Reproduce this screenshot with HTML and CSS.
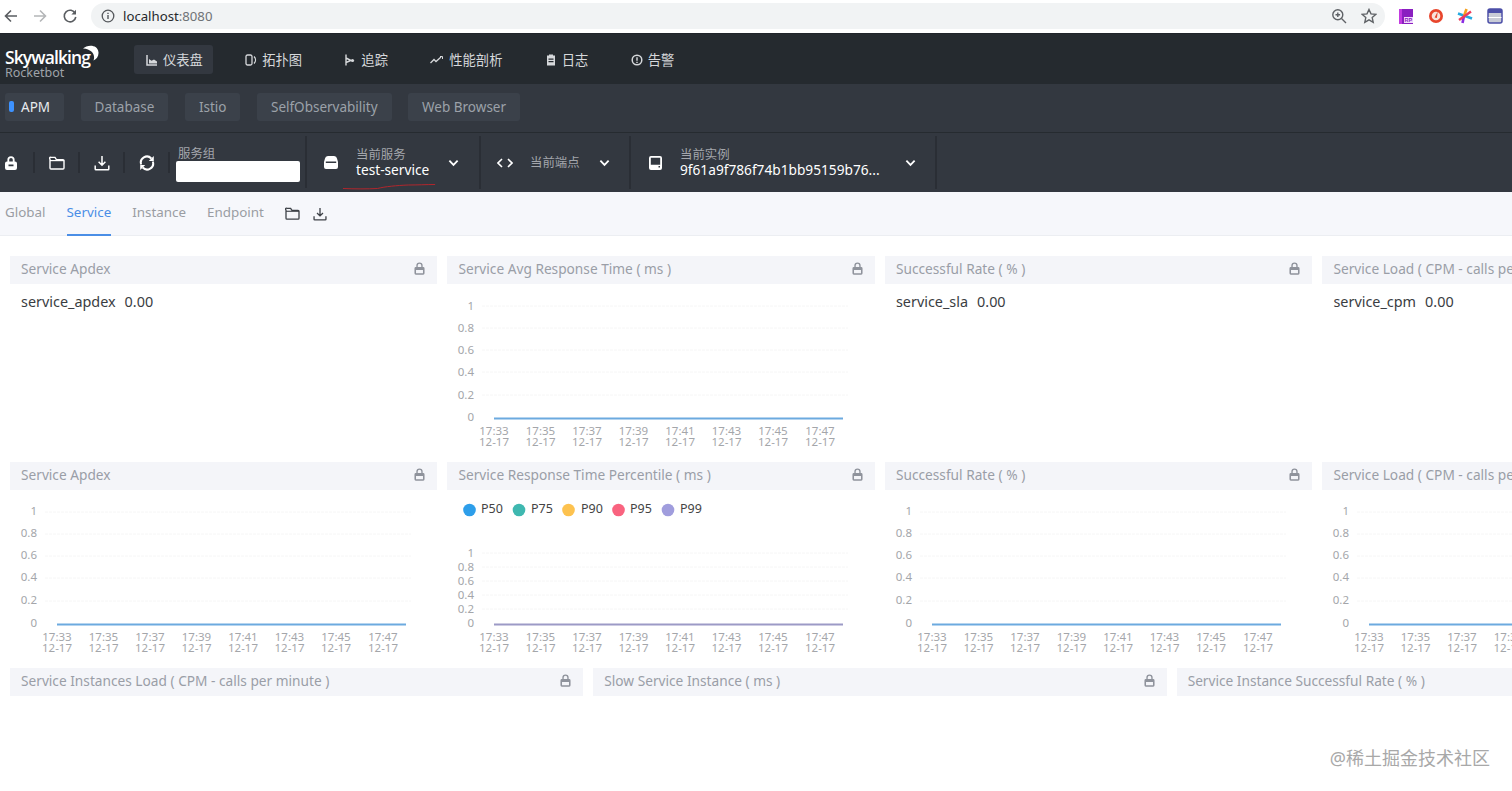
FILE: index.html
```html
<!DOCTYPE html>
<html lang="zh">
<head>
<meta charset="utf-8">
<title>Rocketbot</title>
<link rel="stylesheet" href="styles.css">
</head>
<body>
<svg class="sprite" aria-hidden="true">
  <symbol id="i-lock" viewBox="0 0 12 14"><path d="M3.300 6V3.800a2.700 2.700 0 0 1 5.400 0V6" fill="none" stroke="currentColor" stroke-width="1.500"/><path fill-rule="evenodd" fill="currentColor" d="M2 5.400h8a1.500 1.500 0 0 1 1.500 1.500v5.400A1.500 1.500 0 0 1 10 13.800H2a1.500 1.500 0 0 1-1.500-1.500V6.900A1.500 1.500 0 0 1 2 5.400zm.2 3.300v3.400h7.600V8.700z"/></symbol>
  <symbol id="i-lock-solid" viewBox="0 0 12 14"><path d="M3.300 6V3.800a2.700 2.700 0 0 1 5.400 0V6" fill="none" stroke="currentColor" stroke-width="1.800"/><path fill-rule="evenodd" fill="currentColor" d="M2 5.400h8a2 2 0 0 1 2 2v4.600a2 2 0 0 1-2 2H2a2 2 0 0 1-2-2V7.400a2 2 0 0 1 2-2zm1.500 3.200v1.700h5V8.600z"/></symbol>
  <symbol id="i-folder" viewBox="0 0 16 14"><path d="M1 3.200V12a1 1 0 0 0 1 1h12a1 1 0 0 0 1-1V4.600a1 1 0 0 0-1-1H7.400L6 1.400H2a1 1 0 0 0-1 1.800z" fill="none" stroke="currentColor" stroke-width="1.400"/><path d="M1 4.600h14" stroke="currentColor" stroke-width="1.200"/></symbol>
  <symbol id="i-down" viewBox="0 0 16 16"><path d="M8 1v9M4.600 6.800 8 10.200l3.400-3.400M1.200 10.500V14a.8.8 0 0 0 .8.8h12a.8.8 0 0 0 .8-.8v-3.500" fill="none" stroke="currentColor" stroke-width="1.500"/></symbol>
  <symbol id="i-chev" viewBox="0 0 12 8"><path d="M1.500 1.500 6 6l4.500-4.500" fill="none" stroke="currentColor" stroke-width="2"/></symbol>
</svg>

<header class="browser">
  <svg class="b-ico" width="16" height="16" viewBox="0 0 16 16"><path d="M14 8H3M8 2.500 2.500 8 8 13.500" fill="none" stroke="#5a5d61" stroke-width="1.600"/></svg>
  <svg class="b-ico fwd" width="16" height="16" viewBox="0 0 16 16"><path d="M2 8h11M8 2.500 13.500 8 8 13.500" fill="none" stroke="#b4b6b8" stroke-width="1.600"/></svg>
  <svg class="b-ico rel" width="16" height="16" viewBox="0 0 16 16"><path d="M13.300 5.500A5.800 5.800 0 1 0 13.800 9" fill="none" stroke="#5a5d61" stroke-width="1.600"/><path d="M14 1.800v4.600H9.400z" fill="#5a5d61"/></svg>
  <div class="omni">
    <svg width="14" height="14" viewBox="0 0 14 14"><circle cx="7" cy="7" r="5.800" fill="none" stroke="#55585c" stroke-width="1.300"/><path d="M7 6v4M7 3.700v1.300" stroke="#55585c" stroke-width="1.400"/></svg>
    <span class="url">localhost<span class="port">:8080</span></span>
    <span class="spacer"></span>
    <svg class="om-zoom" width="16" height="16" viewBox="0 0 16 16"><circle cx="6.800" cy="6.800" r="5" fill="none" stroke="#5f6266" stroke-width="1.400"/><path d="M10.500 10.500 15 15M4.500 6.800h4.600M6.800 4.500v4.600" stroke="#5f6266" stroke-width="1.400"/></svg>
    <svg width="16" height="16" viewBox="0 0 16 16"><path d="m8 1.500 2 4.400 4.800.5-3.600 3.200 1 4.700L8 11.900l-4.200 2.400 1-4.700L1.200 6.400 6 5.900z" fill="none" stroke="#5f6266" stroke-width="1.400"/></svg>
  </div>
  <div class="exts">
    <svg width="16" height="16" viewBox="0 0 16 16"><rect x="1" y="1" width="14" height="15" fill="#8a1fc0"/><rect x="1" y="1" width="3" height="15" fill="#c23be0"/><rect x="6" y="9" width="9" height="6" fill="#f3d9fb"/><text class="rp" x="6.500" y="14">RP</text></svg>
    <svg width="16" height="16" viewBox="0 0 16 16"><circle cx="8" cy="8" r="7" fill="#e8452c"/><circle cx="8" cy="8" r="4.300" fill="#f8e3da"/><path d="M9.800 3.500 6.600 9.500l2.300.4z" fill="#e8452c"/></svg>
    <svg width="16" height="16" viewBox="0 0 16 16"><path d="M1 5.500l14 5" stroke="#25a9e0" stroke-width="2.600"/><path d="M9.500 1 7 8" stroke="#f4a11f" stroke-width="2.600"/><path d="M7 8 5.500 15" stroke="#8a2be2" stroke-width="2.600"/><path d="M14 3.500 2 12" stroke="#ee3d5b" stroke-width="2.400"/></svg>
    <svg width="16" height="16" viewBox="0 0 16 16"><rect x="1" y="1" width="14" height="14" rx="2" fill="#c8cbd6" stroke="#4c4fa8" stroke-width="1.500"/><rect x="1" y="1" width="14" height="4" fill="#4c4fa8"/><path d="M1.500 9.500h13" stroke="#fff"/></svg>
  </div>
</header>

<nav class="nav">
  <div class="logo">
    <div class="logo-main">Skywalking</div>
    <svg class="logo-arc" width="16" height="16" viewBox="0 0 16 16"><path d="M0 3.500C4-.5 15-1 15.500 7.500c.2 3.700-2 6.800-5 8C12.500 10.500 9.500 4 0 3.500z" fill="#fff"/></svg>
    <div class="logo-sub">Rocketbot</div>
  </div>
  <a class="nav-item active"><svg class="nav-ico" width="12" height="12" viewBox="0 0 12 12"><path d="M1 1v10h10" fill="none" stroke="currentColor" stroke-width="1.500"/><path d="M3 9.500V5l2.500 1.800L8 5.500l3 2v2z" fill="currentColor"/></svg>仪表盘</a>
  <a class="nav-item"><svg class="nav-ico" width="12" height="12" viewBox="0 0 12 12"><rect x="1" y="1" width="6" height="10" rx="1.500" fill="none" stroke="currentColor" stroke-width="1.300"/><path d="M9 2.500c2 2 2 5 0 7" fill="none" stroke="currentColor" stroke-width="1.300"/></svg>拓扑图</a>
  <a class="nav-item"><svg class="nav-ico" width="12" height="12" viewBox="0 0 12 12"><path d="M2 .5v11M2 4l5 2.500-5 2" fill="none" stroke="currentColor" stroke-width="1.400"/><circle cx="8.500" cy="6.500" r="1.600" fill="currentColor"/></svg>追踪</a>
  <a class="nav-item"><svg class="nav-ico wide" width="13" height="12" viewBox="0 0 13 12"><path d="M.5 9 4 5.500l2 2L11 3" fill="none" stroke="currentColor" stroke-width="1.300"/><path d="M10 2.500h2.500V5" fill="none" stroke="currentColor"/></svg>性能剖析</a>
  <a class="nav-item"><svg class="nav-ico" width="12" height="12" viewBox="0 0 12 12"><path fill-rule="evenodd" d="M2 1.500h2V.5h4v1h2v10H2zm1.500 3v1.200h5V4.500zm0 2.500v1.200h5V7z" fill="currentColor"/></svg>日志</a>
  <a class="nav-item"><svg class="nav-ico" width="12" height="12" viewBox="0 0 12 12"><circle cx="6" cy="6" r="4.800" fill="none" stroke="currentColor" stroke-width="1.500"/><path d="M6 3.200v3.500M6 7.800v1.200" stroke="currentColor" stroke-width="1.400"/></svg>告警</a>
</nav>

<div class="groups">
  <a class="group on"><i class="mark"></i>APM</a>
  <a class="group">Database</a>
  <a class="group">Istio</a>
  <a class="group">SelfObservability</a>
  <a class="group">Web Browser</a>
</div>

<div class="toolbar">
  <div class="tool t-lock"><svg width="12" height="14"><use href="#i-lock-solid"/></svg></div>
  <div class="tool t-folder"><svg width="16" height="14"><use href="#i-folder"/></svg></div>
  <div class="tool t-down"><svg width="16" height="16"><use href="#i-down"/></svg></div>
  <div class="tool t-refresh"><svg width="16" height="16" viewBox="0 0 16 16"><path d="M2.200 9.500A6 6 0 0 1 12.300 3.500M13.800 6.500A6 6 0 0 1 3.700 12.500" fill="none" stroke="#fff" stroke-width="2"/><path d="M14.800 1v5h-5zM1.200 15v-5h5z" fill="#fff"/></svg></div>
  <div class="tool t-group">
    <div class="t-label">服务组</div>
    <div class="t-input"></div>
  </div>
  <div class="tool t-sel t-service">
    <svg class="sel-ico" width="14" height="13" viewBox="0 0 14 13"><path fill-rule="evenodd" fill="#fff" d="M4 0h6a3 3 0 0 1 3 2.500L14 6v5a2 2 0 0 1-2 2H2a2 2 0 0 1-2-2V6l1-3.500A3 3 0 0 1 4 0zM1.800 5.600v1.300h10.400V5.600z"/></svg>
    <div class="sel-text"><div class="t-label">当前服务</div><div class="t-value">test-service</div></div>
    <svg class="chev" width="11" height="8"><use href="#i-chev"/></svg>
    <svg class="scribble" width="96" height="8" viewBox="0 0 100 8" preserveAspectRatio="none"><path d="M1 6.500c12 .5 26 .5 36 0 8-2 20-3 32-3.500 10 0 18-.5 28-.5" fill="none" stroke="#b3262c" stroke-width="1"/></svg>
  </div>
  <div class="tool t-sel t-endpoint">
    <svg class="sel-ico" width="16" height="10" viewBox="0 0 16 10"><path d="M5 1 1 5l4 4M11 1l4 4-4 4" fill="none" stroke="#fff" stroke-width="1.600"/></svg>
    <div class="sel-text"><div class="t-label">当前端点</div></div>
    <svg class="chev" width="11" height="8"><use href="#i-chev"/></svg>
  </div>
  <div class="tool t-sel t-instance">
    <svg class="sel-ico" width="15" height="14" viewBox="0 0 15 14"><path fill-rule="evenodd" fill="#fff" d="M3 0h9a2 2 0 0 1 2 2v10a2 2 0 0 1-2 2H3a2 2 0 0 1-2-2V2a2 2 0 0 1 2-2zm-.2 1.800v7h9.400v-7zM10.500 10v1.500H12V10z"/></svg>
    <div class="sel-text"><div class="t-label">当前实例</div><div class="t-value">9f61a9f786f74b1bb95159b76...</div></div>
    <svg class="chev" width="11" height="8"><use href="#i-chev"/></svg>
  </div>
</div>

<div class="tabs">
  <a class="tab">Global</a>
  <a class="tab cur">Service</a>
  <a class="tab">Instance</a>
  <a class="tab">Endpoint</a>
  <svg class="tab-ico first" width="15" height="13"><use href="#i-folder"/></svg>
  <svg class="tab-ico" width="14" height="14"><use href="#i-down"/></svg>
</div>

<main class="viewport">
  <div class="grid">
    <section class="card s3">
      <header class="card-h"><span>Service Apdex</span><svg class="lock" width="11" height="13"><use href="#i-lock"/></svg></header>
      <p class="metric">service_apdex<b>0.00</b></p>
    </section>
    <section class="card s3">
      <header class="card-h"><span>Service Avg Response Time ( ms )</span><svg class="lock" width="11" height="13"><use href="#i-lock"/></svg></header>
      <svg class="chart" width="428" height="168">
        <g class="grid-l"><path d="M34 22h366M34 44h366M34 66h366M34 88h366M34 111h366"/></g>
        <g class="ay"><text x="26" y="26">1</text><text x="26" y="48">0.8</text><text x="26" y="70">0.6</text><text x="26" y="92">0.4</text><text x="26" y="115">0.2</text><text x="26" y="137">0</text></g>
        <path class="line blue" d="M46 134.500h349"/>
        <g class="ax"><text x="46" y="151">17:33</text><text x="46" y="162">12-17</text><text x="92.500" y="151">17:35</text><text x="92.500" y="162">12-17</text><text x="139" y="151">17:37</text><text x="139" y="162">12-17</text><text x="185.500" y="151">17:39</text><text x="185.500" y="162">12-17</text><text x="232" y="151">17:41</text><text x="232" y="162">12-17</text><text x="278.500" y="151">17:43</text><text x="278.500" y="162">12-17</text><text x="325" y="151">17:45</text><text x="325" y="162">12-17</text><text x="372" y="151">17:47</text><text x="372" y="162">12-17</text></g>
      </svg>
    </section>
    <section class="card s3">
      <header class="card-h"><span>Successful Rate ( % )</span><svg class="lock" width="11" height="13"><use href="#i-lock"/></svg></header>
      <p class="metric">service_sla<b>0.00</b></p>
    </section>
    <section class="card s3">
      <header class="card-h"><span>Service Load ( CPM - calls per minute )</span><svg class="lock" width="11" height="13"><use href="#i-lock"/></svg></header>
      <p class="metric">service_cpm<b>0.00</b></p>
    </section>

    <section class="card s3">
      <header class="card-h"><span>Service Apdex</span><svg class="lock" width="11" height="13"><use href="#i-lock"/></svg></header>
      <svg class="chart" width="428" height="168">
        <g class="grid-l"><path d="M34 22h366M34 44h366M34 66h366M34 88h366M34 111h366"/></g>
        <g class="ay"><text x="26" y="25">1</text><text x="26" y="47">0.8</text><text x="26" y="69">0.6</text><text x="26" y="91">0.4</text><text x="26" y="114">0.2</text><text x="26" y="137">0</text></g>
        <path class="line blue" d="M46 134.500h349"/>
        <g class="ax"><text x="46" y="151">17:33</text><text x="46" y="162">12-17</text><text x="92.500" y="151">17:35</text><text x="92.500" y="162">12-17</text><text x="139" y="151">17:37</text><text x="139" y="162">12-17</text><text x="185.500" y="151">17:39</text><text x="185.500" y="162">12-17</text><text x="232" y="151">17:41</text><text x="232" y="162">12-17</text><text x="278.500" y="151">17:43</text><text x="278.500" y="162">12-17</text><text x="325" y="151">17:45</text><text x="325" y="162">12-17</text><text x="372" y="151">17:47</text><text x="372" y="162">12-17</text></g>
      </svg>
    </section>
    <section class="card s3">
      <header class="card-h"><span>Service Response Time Percentile ( ms )</span><svg class="lock" width="11" height="13"><use href="#i-lock"/></svg></header>
      <svg class="chart" width="428" height="168">
        <g class="legend"><circle cx="21.500" cy="20" r="6.300" fill="#2d9eea"/><text x="33" y="23">P50</text><circle cx="71" cy="20" r="6.300" fill="#3fb8b0"/><text x="83" y="23">P75</text><circle cx="120.500" cy="20" r="6.300" fill="#fdc24f"/><text x="133" y="23">P90</text><circle cx="170.500" cy="20" r="6.300" fill="#f9637f"/><text x="182" y="23">P95</text><circle cx="220" cy="20" r="6.300" fill="#a09ddd"/><text x="232" y="23">P99</text></g>
        <g class="grid-l"><path d="M34 63h366M34 77h366M34 91h366M34 105h366M34 119h366"/></g>
        <g class="ay"><text x="26" y="67">1</text><text x="26" y="81">0.8</text><text x="26" y="95">0.6</text><text x="26" y="109">0.4</text><text x="26" y="123">0.2</text><text x="26" y="137">0</text></g>
        <path class="line purple" d="M46 134.500h349"/>
        <g class="ax"><text x="46" y="151">17:33</text><text x="46" y="162">12-17</text><text x="92.500" y="151">17:35</text><text x="92.500" y="162">12-17</text><text x="139" y="151">17:37</text><text x="139" y="162">12-17</text><text x="185.500" y="151">17:39</text><text x="185.500" y="162">12-17</text><text x="232" y="151">17:41</text><text x="232" y="162">12-17</text><text x="278.500" y="151">17:43</text><text x="278.500" y="162">12-17</text><text x="325" y="151">17:45</text><text x="325" y="162">12-17</text><text x="372" y="151">17:47</text><text x="372" y="162">12-17</text></g>
      </svg>
    </section>
    <section class="card s3">
      <header class="card-h"><span>Successful Rate ( % )</span><svg class="lock" width="11" height="13"><use href="#i-lock"/></svg></header>
      <svg class="chart" width="428" height="168">
        <g class="grid-l"><path d="M34 22h366M34 44h366M34 66h366M34 88h366M34 111h366"/></g>
        <g class="ay"><text x="26" y="25">1</text><text x="26" y="47">0.8</text><text x="26" y="69">0.6</text><text x="26" y="91">0.4</text><text x="26" y="114">0.2</text><text x="26" y="137">0</text></g>
        <path class="line blue" d="M46 134.500h349"/>
        <g class="ax"><text x="46" y="151">17:33</text><text x="46" y="162">12-17</text><text x="92.500" y="151">17:35</text><text x="92.500" y="162">12-17</text><text x="139" y="151">17:37</text><text x="139" y="162">12-17</text><text x="185.500" y="151">17:39</text><text x="185.500" y="162">12-17</text><text x="232" y="151">17:41</text><text x="232" y="162">12-17</text><text x="278.500" y="151">17:43</text><text x="278.500" y="162">12-17</text><text x="325" y="151">17:45</text><text x="325" y="162">12-17</text><text x="372" y="151">17:47</text><text x="372" y="162">12-17</text></g>
      </svg>
    </section>
    <section class="card s3">
      <header class="card-h"><span>Service Load ( CPM - calls per minute )</span><svg class="lock" width="11" height="13"><use href="#i-lock"/></svg></header>
      <svg class="chart" width="428" height="168">
        <g class="grid-l"><path d="M34 22h366M34 44h366M34 66h366M34 88h366M34 111h366"/></g>
        <g class="ay"><text x="26" y="25">1</text><text x="26" y="47">0.8</text><text x="26" y="69">0.6</text><text x="26" y="91">0.4</text><text x="26" y="114">0.2</text><text x="26" y="137">0</text></g>
        <path class="line blue" d="M46 134.500h349"/>
        <g class="ax"><text x="46" y="151">17:33</text><text x="46" y="162">12-17</text><text x="92.500" y="151">17:35</text><text x="92.500" y="162">12-17</text><text x="139" y="151">17:37</text><text x="139" y="162">12-17</text><text x="185.500" y="151">17:39</text><text x="185.500" y="162">12-17</text><text x="232" y="151">17:41</text><text x="232" y="162">12-17</text><text x="278.500" y="151">17:43</text><text x="278.500" y="162">12-17</text><text x="325" y="151">17:45</text><text x="325" y="162">12-17</text><text x="372" y="151">17:47</text><text x="372" y="162">12-17</text></g>
      </svg>
    </section>

    <section class="card s4">
      <header class="card-h"><span>Service Instances Load ( CPM - calls per minute )</span><svg class="lock" width="11" height="13"><use href="#i-lock"/></svg></header>
    </section>
    <section class="card s4">
      <header class="card-h"><span>Slow Service Instance ( ms )</span><svg class="lock" width="11" height="13"><use href="#i-lock"/></svg></header>
    </section>
    <section class="card s4">
      <header class="card-h"><span>Service Instance Successful Rate ( % )</span><svg class="lock" width="11" height="13"><use href="#i-lock"/></svg></header>
    </section>
  </div>
  <div class="watermark">@稀土掘金技术社区</div>
</main>
</body>
</html>
```
FILE: styles.css
```css
* { box-sizing: border-box; }
html, body { margin: 0; height: 100%; }
body {
  overflow: hidden;
  display: flex;
  flex-direction: column;
  background: #fff;
  font-family: "Noto Sans", "Noto Sans CJK SC", sans-serif;
  font-size: 13.7px;
  color: #333;
}
.sprite { position: absolute; width: 0; height: 0; }
svg { display: block; flex: none; }

/* browser chrome */
.browser {
  height: 34px;
  flex: none;
  display: flex;
  align-items: center;
  padding: 0 0 1px 3px;
  background: #fff;
  border-bottom: 1px solid #20242a;
}
.fwd { margin-left: 13px; }
.rel { margin-left: 14px; }
.omni {
  display: flex;
  align-items: center;
  width: 1294px;
  height: 26px;
  margin-left: 13px;
  padding: 0 8px 0 10px;
  border-radius: 13px;
  background: #f1f3f4;
}
.url { margin-left: 8px; font-size: 13.2px; color: #26282b; }
.port { color: #6f7276; }
.spacer { flex: 1; }
.om-zoom { margin-right: 14px; }
.exts { display: flex; gap: 13.5px; margin-left: 13px; }
.rp { font: bold 5.5px "Liberation Sans", sans-serif; fill: #8a1fc0; }

/* main nav */
.nav {
  height: 50px;
  flex: none;
  display: flex;
  align-items: center;
  gap: 20.3px;
  background: #252a2f;
  color: #d6d8db;
}
.logo { position: relative; width: 113.7px; height: 50px; }
.logo-main {
  position: absolute;
  left: 5px;
  top: 13px;
  font-family: "Open Sans", sans-serif;
  font-size: 17.5px;
  font-weight: 600;
  letter-spacing: -.9px;
  line-height: 20px;
  color: #fff;
}
.logo-arc { position: absolute; left: 83px; top: 11px; }
.logo-sub {
  position: absolute;
  left: 5px;
  top: 32px;
  font-size: 12.5px;
  line-height: 14px;
  color: #9fa3a9;
}
.nav-item {
  display: flex;
  align-items: center;
  height: 29px;
  padding: 0 10px 0 12px;
  margin-top: 1px;
  border-radius: 3px;
  font-size: 13.3px;
}
.nav-item.active { background: #333840; }
.nav-ico { margin-right: 5px; }
.nav-ico.wide { margin-right: 6px; }

/* group tabs */
.groups {
  height: 49px;
  flex: none;
  display: flex;
  align-items: center;
  gap: 16.5px;
  padding: 0 0 3px 5px;
  background: #333840;
  border-bottom: 1px solid #262b30;
  font-size: 13.5px;
}
.group {
  display: flex;
  align-items: center;
  height: 28px;
  padding: 0 14px;
  border-radius: 3px;
  background: #3b414a;
  color: #9ca1a9;
}
.group.on { padding: 0 14px 0 4px; color: #e8eaed; }
.mark { width: 5px; height: 11px; margin-right: 7px; border-radius: 2px; background: #3d92ff; }

/* toolbar */
.toolbar {
  height: 59px;
  flex: none;
  display: flex;
  background: #333840;
  color: #fff;
}
.tool {
  display: flex;
  align-items: center;
  justify-content: center;
  margin: 3px 0;
  border-right: 2px solid #2a2e35;
}
.t-lock { width: 35px; padding-right: 11px; }
.t-folder { width: 45px; }
.t-down { width: 45px; }
.t-refresh { width: 45px; }
.t-lock, .t-folder, .t-down, .t-refresh { margin: 19px 0; }
.t-label { font-size: 12.4px; line-height: 16px; color: #a3a6ac; }
.t-input { width: 124px; height: 21px; border-radius: 2px; background: #fff; }
.t-group {
  width: 137px;
  height: 52px;
  flex-direction: column;
  align-items: flex-start;
  justify-content: flex-start;
  padding-left: 6px;
}
.t-group .t-label { margin: 10px 0 0 2px; line-height: 15px; }
.t-sel {
  position: relative;
  justify-content: flex-start;
  padding-left: 17px;
}
.sel-text { width: 0; flex: 1; }
.t-value { font-size: 13.7px; line-height: 14px; color: #fff; white-space: nowrap; }
.t-service { width: 174px; height: 53px; }
.t-service .sel-text { margin: 0 0 2px 18px; }
.t-service .chev { margin-right: 20px; }
.t-endpoint { width: 150px; padding-left: 16px; height: 53px; }
.t-endpoint .sel-text { margin-left: 17px; }
.t-endpoint .chev { margin-right: 19px; }
.t-instance { width: 306px; padding-left: 17px; height: 53px; }
.t-instance .sel-text { margin: 0 0 2px 17px; }
.t-instance .chev { margin-right: 19px; }
.scribble { position: absolute; left: 35px; top: 46px; }

/* dashboard tabs */
.tabs {
  height: 44px;
  flex: none;
  display: flex;
  align-items: center;
  gap: 21px;
  padding: 0 0 4px 5px;
  background: #f6f7fb;
  border-bottom: 1px solid #eceef2;
  color: #9a9da3;
  font-size: 13.4px;
}
.tab { position: relative; }
.tab.cur { color: #4a8ee6; }
.tab.cur::after {
  content: "";
  position: absolute;
  left: 0;
  right: 0;
  top: 31px;
  height: 2px;
  background: #4a8ee6;
}
.tab-ico { color: #3e4248; margin-top: 4px; }
.tab-ico + .tab-ico { margin-left: -8px; }

/* dashboard grid */
.viewport { position: relative; flex: 1; min-height: 0; overflow: hidden; }
.grid {
  display: grid;
  grid-template-columns: repeat(12, 135.833px);
  grid-auto-rows: 196px;
  gap: 10px;
  width: 1740px;
  margin: 20px 0 0 10px;
}
.s3 { grid-column: span 3; }
.s4 { grid-column: span 4; }
.card-h {
  display: flex;
  align-items: center;
  justify-content: space-between;
  height: 28px;
  padding: 0 12px 3px 11px;
  background: #f4f5f9;
  color: #9a9ea7;
  white-space: nowrap;
}
.lock { color: #8f939c; }
.metric { margin: 8px 0 0 11px; font-size: 14.4px; line-height: 19px; color: #3a3d42; }
.metric b { margin-left: 9px; font-weight: 400; }

.chart { margin-left: 1px; }
.chart text { font-size: 11.5px; fill: #a4a6aa; }
.ay text { text-anchor: end; }
.ax text { text-anchor: middle; }
.grid-l path { stroke: #f6f6f6; stroke-width: 1; stroke-dasharray: 3 1; fill: none; }
.line { fill: none; stroke-width: 2; }
.blue { stroke: #6caadf; }
.purple { stroke: #9c9ac6; }
.chart .legend text { fill: #444; font-size: 12.5px; }

.watermark {
  position: absolute;
  right: 22px;
  top: 510px;
  font-size: 18px;
  line-height: 24px;
  color: #a8a8a8;
}
```
